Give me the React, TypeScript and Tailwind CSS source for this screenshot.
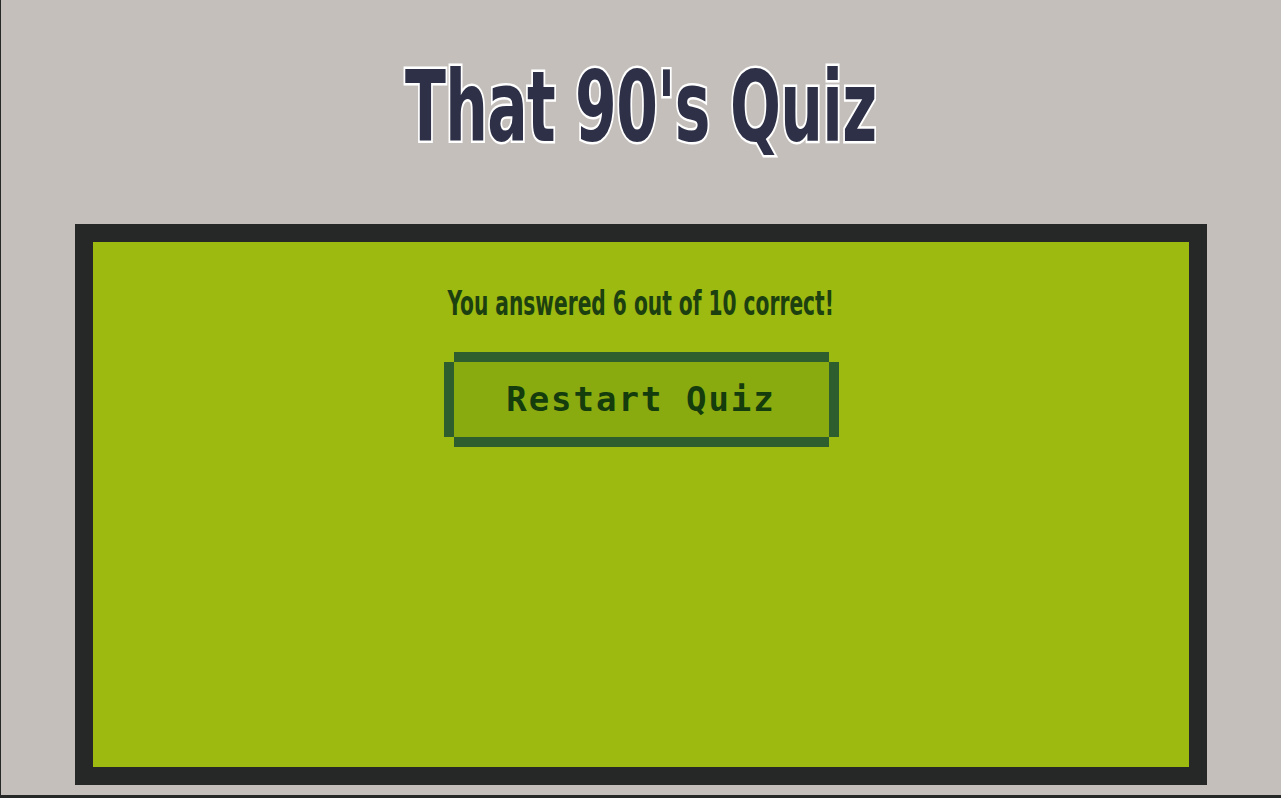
export default function App() {
  return (
    <div className="flex h-[798px] flex-col overflow-hidden border-l border-[#262828] bg-[#c4bfbb]">
      <header className="flex h-[224px] items-start justify-center pt-[58px]">
        <h1 className="inline-block origin-center scale-x-[0.68] font-['DejaVu_Sans_Condensed','DejaVu_Sans',sans-serif] text-[98px] font-bold leading-none tracking-[-1px] text-[#2e3047] [-webkit-text-stroke:5px_#ffffff] [paint-order:stroke_fill]">
          That 90's Quiz
        </h1>
      </header>

      <main className="mx-auto h-[561px] w-[1132px] border-[18px] border-[#262828] bg-[#9cba10]">
        <div className="flex flex-col items-center pt-[44px]">
          <p className="inline-block scale-x-[0.66] font-['DejaVu_Sans_Condensed','DejaVu_Sans',sans-serif] text-[34px] font-bold leading-none text-[#1c400f]">
            You answered 6 out of 10 correct!
          </p>
          <button
            type="button"
            className="mt-[42px] h-[75px] w-[375px] bg-[#8aab10] font-['DejaVu_Sans_Mono',monospace] text-[34px] font-bold tracking-[2px] text-[#143c0c] shadow-[0_10px_0_0_#2e5e2e,0_-10px_0_0_#2e5e2e,10px_0_0_0_#2e5e2e,-10px_0_0_0_#2e5e2e]"
          >
            Restart Quiz
          </button>
        </div>
      </main>

      <div className="mt-auto h-[3px] bg-[#262828]" />
    </div>
  );
}
